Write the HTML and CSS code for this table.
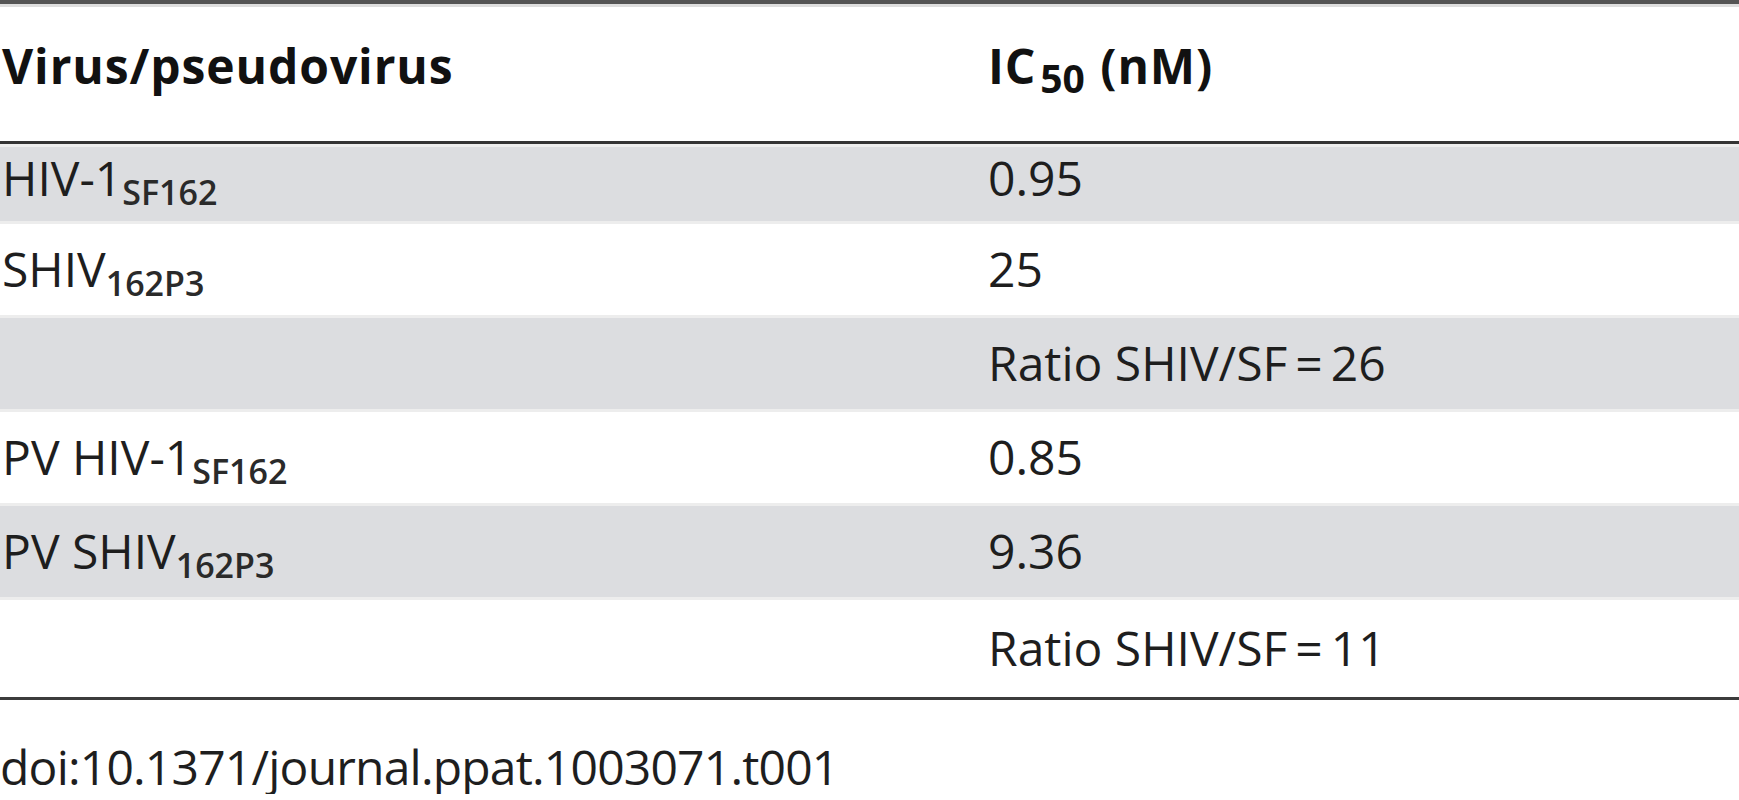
FILE: index.html
```html
<!DOCTYPE html>
<html lang="en">
<head>
<meta charset="utf-8">
<title>Table 1</title>
<link rel="stylesheet" href="styles.css">
</head>
<body>
<div class="figure">
  <table class="data">
    <thead>
      <tr>
        <th class="c1">Virus/pseudovirus</th>
        <th class="c2">IC<sub>50</sub> (nM)</th>
      </tr>
    </thead>
    <tbody>
      <tr class="shade first">
        <td class="c1">HIV-1<sub>SF162</sub></td>
        <td class="c2">0.95</td>
      </tr>
      <tr>
        <td class="c1">SHIV<sub>162P3</sub></td>
        <td class="c2">25</td>
      </tr>
      <tr class="shade">
        <td class="c1"></td>
        <td class="c2">Ratio SHIV/SF&#8201;=&#8201;26</td>
      </tr>
      <tr>
        <td class="c1">PV HIV-1<sub>SF162</sub></td>
        <td class="c2">0.85</td>
      </tr>
      <tr class="shade">
        <td class="c1">PV SHIV<sub>162P3</sub></td>
        <td class="c2">9.36</td>
      </tr>
      <tr class="last">
        <td class="c1"></td>
        <td class="c2">Ratio SHIV/SF&#8201;=&#8201;11</td>
      </tr>
    </tbody>
  </table>
  <p class="doi">doi:10.1371/journal.ppat.1003071.t001</p>
</div>
</body>
</html>
```

FILE: styles.css
```css
html, body {
  margin: 0;
  padding: 0;
  background: #ffffff;
}

body {
  font-family: "Open Sans", "Noto Sans", "DejaVu Sans", sans-serif;
  font-size: 48px;
  color: #1e1e1e;
}

.figure {
  width: 1739px;
}

.data {
  width: 100%;
  border-collapse: separate;
  border-spacing: 0;
  border-top: 4px solid #555555;
  border-bottom: 3px solid #3c3c3c;
}

.data th,
.data td {
  padding: 0;
  text-align: left;
  vertical-align: middle;
  line-height: 1.1;
}

.data th {
  height: 118px;
  padding-bottom: 16px;
  border-top: 3px solid #dedede;
  border-bottom: 3px solid #343434;
  font-weight: 700;
  color: #111111;
  letter-spacing: 0.9px;
}

.data td {
  height: 91px;
  border-top: 3px solid #ededed;
}

.data tr.first td {
  height: 62px;
  padding-bottom: 12px;
}

.data tr.last td {
  height: 97px;
}

.data .c1 {
  width: 988px;
  padding-left: 2px;
  box-sizing: border-box;
}

.data .c2 {
  padding-left: 0;
}

.data tr.shade td {
  background: #dcdde0;
}

.data sub {
  font-size: 34px;
  line-height: 0;
  vertical-align: -9px;
  font-weight: 600;
  color: #2a2a2a;
}

.data th sub {
  font-size: 39px;
  margin-left: 4px;
  margin-right: 2px;
  font-weight: 700;
  color: #111111;
  letter-spacing: 0;
}

.doi {
  margin: 39px 0 0 0;
  line-height: 1.15;
  color: #1e1e1e;
  letter-spacing: -0.8px;
}
```
